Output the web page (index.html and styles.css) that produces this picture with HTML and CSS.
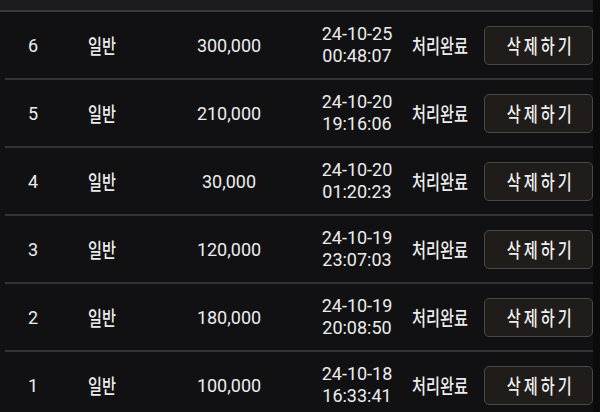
FILE: index.html
```html
<!DOCTYPE html>
<html lang="ko">
<head>
  <meta charset="UTF-8" />
  <meta name="viewport" content="width=device-width, initial-scale=1.0"/>
  <title>충전 내역</title>
  <link rel="stylesheet" href="styles.css">
</head>
<body>

  <div class="page">
    <div class="list">
      <div class="list-top"></div>

      <div class="row">
        <div class="no">6</div>
        <div class="type"><span class="ko">일반</span></div>
        <div class="amount">300,000</div>
        <div class="date">24-10-25<br>00:48:07</div>
        <div class="status"><span class="ko">처리완료</span></div>
        <div><button class="btn"><span class="ko">삭제하기</span></button></div>
      </div>

      <div class="row">
        <div class="no">5</div>
        <div class="type"><span class="ko">일반</span></div>
        <div class="amount">210,000</div>
        <div class="date">24-10-20<br>19:16:06</div>
        <div class="status"><span class="ko">처리완료</span></div>
        <div><button class="btn"><span class="ko">삭제하기</span></button></div>
      </div>

      <div class="row">
        <div class="no">4</div>
        <div class="type"><span class="ko">일반</span></div>
        <div class="amount">30,000</div>
        <div class="date">24-10-20<br>01:20:23</div>
        <div class="status"><span class="ko">처리완료</span></div>
        <div><button class="btn"><span class="ko">삭제하기</span></button></div>
      </div>

      <div class="row">
        <div class="no">3</div>
        <div class="type"><span class="ko">일반</span></div>
        <div class="amount">120,000</div>
        <div class="date">24-10-19<br>23:07:03</div>
        <div class="status"><span class="ko">처리완료</span></div>
        <div><button class="btn"><span class="ko">삭제하기</span></button></div>
      </div>

      <div class="row">
        <div class="no">2</div>
        <div class="type"><span class="ko">일반</span></div>
        <div class="amount">180,000</div>
        <div class="date">24-10-19<br>20:08:50</div>
        <div class="status"><span class="ko">처리완료</span></div>
        <div><button class="btn"><span class="ko">삭제하기</span></button></div>
      </div>

      <div class="row">
        <div class="no">1</div>
        <div class="type"><span class="ko">일반</span></div>
        <div class="amount">100,000</div>
        <div class="date">24-10-18<br>16:33:41</div>
        <div class="status"><span class="ko">처리완료</span></div>
        <div><button class="btn"><span class="ko">삭제하기</span></button></div>
      </div>
    </div>
    <div class="side"></div>
  </div>

</body>
</html>
```

FILE: styles.css
```css
body {
  margin: 0;
  background-color: #111113;
  color: #ececec;
  font-family: Roboto, "Noto Sans CJK KR", sans-serif;
  font-size: 18px;
  overflow: hidden;
}
.page {
  display: flex;
  height: 412px;
}
.list {
  width: 588px;
  margin-left: 5px;
}
.list-top {
  height: 10px;
  margin-left: -5px;
  background-color: #1c1c1f;
  border-bottom: 2px solid #3a3a3d;
}
.row {
  display: grid;
  grid-template-columns: 56px 79px 178px 78px 88px 109px;
  align-items: center;
  height: 66px;
  border-bottom: 2px solid #333336;
}
.no, .amount, .date {
  text-align: center;
}
.ko {
  display: inline-block;
  font-family: "Noto Sans CJK KR", sans-serif;
  font-size: 20px;
  font-weight: 500;
  transform: scaleX(0.76);
  transform-origin: left center;
  white-space: nowrap;
}
.type {
  padding-left: 27px;
}
.date {
  line-height: 22px;
}
.status {
  padding-left: 16px;
}
.btn {
  display: flex;
  align-items: center;
  justify-content: center;
  width: 109px;
  height: 39px;
  padding: 0;
  background-color: #1f1c1a;
  border: 1px solid #4a4745;
  border-radius: 5px;
  color: #f0f0f0;
}
.btn .ko {
  letter-spacing: 4px;
  margin-right: -4px;
  transform-origin: center;
}
.side {
  flex: 1;
  background-color: #0b0b0c;
}
```
